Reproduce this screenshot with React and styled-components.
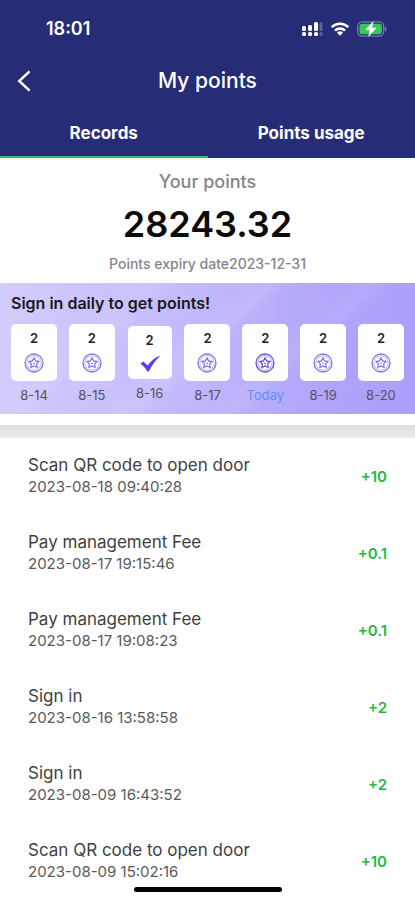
import React, { useState } from 'react'
import styled, { createGlobalStyle } from 'styled-components'

const GlobalStyle = createGlobalStyle`
    * {
        box-sizing: border-box;
    }

    body {
        margin: 0;
        background: #fff;
        font-family: 'Inter', 'Liberation Sans', sans-serif;
        color: #3f3f42;
    }

    h1, h2, p, ul {
        margin: 0;
        padding: 0;
    }

    ul {
        list-style: none;
    }
`;

const days = [
    { label: "8-14", points: 2 },
    { label: "8-15", points: 2 },
    { label: "8-16", points: 2, signed: true },
    { label: "8-17", points: 2 },
    { label: "Today", points: 2, today: true },
    { label: "8-19", points: 2 },
    { label: "8-20", points: 2 }
]

const records = [
    { title: "Scan QR code to open door", time: "2023-08-18 09:40:28", amount: "+10" },
    { title: "Pay management Fee", time: "2023-08-17 19:15:46", amount: "+0.1" },
    { title: "Pay management Fee", time: "2023-08-17 19:08:23", amount: "+0.1" },
    { title: "Sign in", time: "2023-08-16 13:58:58", amount: "+2" },
    { title: "Sign in", time: "2023-08-09 16:43:52", amount: "+2" },
    { title: "Scan QR code to open door", time: "2023-08-09 15:02:16", amount: "+10" }
]

const Header = styled.header`
    background: #262d76;
    color: #fff;
`;

const StatusBar = styled.div`
    display: flex;
    align-items: center;
    justify-content: space-between;
    height: 56px;
    padding: 1px 28px 0 46px;
`;

const Clock = styled.time`
    font-size: 18px;
    font-weight: 600;
    line-height: 24px;
`;

const StatusIcons = styled.div`
    display: flex;
    align-items: center;
    gap: 7px;

    svg {
        display: block;
    }
`;

const NavBar = styled.div`
    display: grid;
    grid-template-columns: 48px 1fr 48px;
    align-items: center;
    height: 50px;
`;

const BackButton = styled.button`
    display: flex;
    align-items: center;
    justify-content: center;
    height: 48px;
    padding: 0;
    border: 0;
    background: none;
    color: inherit;
    cursor: pointer;
`;

const Title = styled.h1`
    font-size: 21px;
    font-weight: 500;
    line-height: 28px;
    text-align: center;
`;

const Tabs = styled.div`
    display: grid;
    grid-template-columns: 1fr 1fr;
`;

const Tab = styled.button`
    height: 52px;
    padding: 4px 0 0;
    border: 0;
    border-bottom: 2px solid ${props => props.$active ? '#3fbd6c' : 'transparent'};
    background: none;
    color: inherit;
    font-family: inherit;
    font-size: 17px;
    font-weight: 700;
    line-height: 24px;
    cursor: pointer;
`;

const Summary = styled.section`
    display: flex;
    flex-direction: column;
    align-items: center;
    padding: 12px 0 9px;
    color: #858587;
`;

const SummaryLabel = styled.h2`
    font-size: 18px;
    font-weight: 500;
    line-height: 24px;
`;

const Balance = styled.p`
    color: #0b0b0b;
    font-size: 36px;
    font-weight: 600;
    line-height: 60px;
`;

const Expiry = styled.p`
    font-size: 14px;
    font-weight: 500;
    line-height: 20px;
`;

const Banner = styled.section`
    height: 131px;
    padding: 10px 11px 0;
    background:
        linear-gradient(138deg, transparent 20%, rgba(255, 255, 255, 0.08) 29%, transparent 32%, transparent 42%, rgba(255, 255, 255, 0.1) 49%, transparent 52%, transparent 60%, rgba(255, 255, 255, 0.08) 67%, transparent 70%),
        linear-gradient(100deg, #d3cdfc 0%, #c4bbfd 42%, #b1a6fb 75%, #aa9ffa 100%);
`;

const BannerTitle = styled.h2`
    color: #18181d;
    font-size: 16px;
    font-weight: 600;
    line-height: 20px;
`;

const Days = styled.ul`
    display: flex;
    justify-content: space-between;
    margin-top: 11px;
`;

const Day = styled.li`
    display: flex;
    flex-direction: column;
    align-items: center;
    width: 46px;
    padding-top: ${props => props.$signed ? '2px' : '0'};
    color: ${props => props.$today ? '#5b93f8' : '#55525f'};
    font-size: 13px;
    line-height: 18px;
    white-space: nowrap;
`;

const DayCard = styled.div`
    display: flex;
    flex-direction: column;
    align-items: center;
    gap: 6px;
    width: ${props => props.$signed ? '44px' : '46px'};
    height: ${props => props.$signed ? '53px' : '57px'};
    margin-bottom: 5px;
    padding-top: 5px;
    border-radius: 5px;
    background: #fff;
    color: #242427;
    font-size: 13px;
    font-weight: 600;

    svg {
        display: block;
    }
`;

const Divider = styled.div`
    height: 13px;
    margin-top: 11px;
    background: linear-gradient(#dcdddf, #e9eaec);
`;

const Row = styled.li`
    display: flex;
    align-items: center;
    justify-content: space-between;
    height: 77px;
    padding: 0 28px 1px;
`;

const RowTitle = styled.p`
    font-size: 17px;
    line-height: 22px;
`;

const RowTime = styled.p`
    color: #59595c;
    font-size: 15px;
    line-height: 22px;
`;

const Amount = styled.span`
    color: #27b83f;
    font-size: 15px;
    font-weight: 600;
`;

const HomeIndicator = styled.div`
    position: fixed;
    bottom: 8px;
    left: 50%;
    width: 148px;
    height: 5px;
    margin-left: -74px;
    border-radius: 3px;
    background: #000;
`;

const SignalIcon = () => (
    <svg width="21" height="14" viewBox="0 0 21 14" fill="#fff" aria-hidden="true">
        <rect x="0" y="4" width="4" height="5" rx="1.5" />
        <rect x="6" y="3" width="4" height="6" rx="1.5" />
        <rect x="12" y="0" width="4" height="9" rx="1.5" />
        <rect x="17.500" y="0" width="3" height="9" rx="1.5" opacity="0.25" />
        <rect x="0" y="10" width="4" height="4" rx="1.5" />
        <rect x="6" y="10" width="4" height="4" rx="1.5" />
        <rect x="12" y="10" width="4" height="4" rx="1.5" />
        <rect x="17.500" y="10" width="3" height="4" rx="1.5" opacity="0.25" />
    </svg>
)

const WifiIcon = () => (
    <svg width="20" height="14" viewBox="0 0 20 14" fill="none" stroke="#fff" strokeWidth="2.6" aria-hidden="true">
        <path d="M1.700 5.200a11.800 11.800 0 0 1 16.600 0" />
        <path d="M5 8.600a7.100 7.100 0 0 1 10 0" />
        <path d="M10 13.8 7 10.7a4.3 4.3 0 0 1 6 0z" fill="#fff" stroke="none" />
    </svg>
)

const BatteryIcon = () => (
    <svg width="30" height="16" viewBox="0 0 30 16" aria-hidden="true">
        <rect x="0.7" y="0.9" width="26" height="14.2" rx="4.5" fill="none" stroke="#7379a6" strokeWidth="1.4" />
        <path d="M28 5.5c2 .6 2 4.4 0 5z" fill="#7379a6" />
        <rect x="2.5" y="2.7" width="22.4" height="10.6" rx="2.8" fill="#35c759" />
        <path d="M16 .8 8.8 8.8h4.3L11.7 15.2 19 7H14.7z" fill="#fff" stroke="#fff" strokeWidth="0.6" strokeLinejoin="round" />
    </svg>
)

const BackIcon = () => (
    <svg width="14" height="22" viewBox="0 0 14 22" fill="none" stroke="#fff" strokeWidth="2.4" aria-hidden="true">
        <path d="M12.6 1.4 2.2 11l10.4 9.6" />
    </svg>
)

const CoinIcon = ({ color }) => (
    <svg width="20" height="20" viewBox="0 0 20 20" fill="none" stroke={color} strokeLinejoin="round" aria-hidden="true">
        <circle cx="10" cy="10" r="9" strokeWidth="1.3" />
        <circle cx="10" cy="10" r="7.2" strokeWidth="0.8" opacity="0.7" />
        <path d="m10 4.8 1.6 3.2 3.5.5-2.5 2.5.6 3.5-3.2-1.6-3.2 1.6.6-3.5-2.5-2.5 3.5-.5z" strokeWidth="1.3" />
        <circle cx="10" cy="10.3" r="0.9" fill={color} stroke="none" />
    </svg>
)

const CheckIcon = () => (
    <svg width="20" height="18" viewBox="0 0 20 18" fill="#5b3fe8" aria-hidden="true">
        <path d="M.4 8.600 3.400 6.600l4.300 4C10.600 6.500 14.700 2.500 19.400.800l.2.600C15.200 5.600 11.600 11 8.700 16.400H7.200C5.400 13.400 3.200 10.700.4 8.600z" />
    </svg>
)

export default function App() {
    const [tab, setTab] = useState("Records")

    return (
        <>
            <GlobalStyle />
            <Header>
                <StatusBar>
                    <Clock>18:01</Clock>
                    <StatusIcons>
                        <SignalIcon />
                        <WifiIcon />
                        <BatteryIcon />
                    </StatusIcons>
                </StatusBar>
                <NavBar>
                    <BackButton type="button" aria-label="Back"><BackIcon /></BackButton>
                    <Title>My points</Title>
                </NavBar>
                <Tabs role="tablist">
                    {["Records", "Points usage"].map((name) => (
                        <Tab
                            key={name}
                            type="button"
                            role="tab"
                            aria-selected={tab === name}
                            $active={tab === name}
                            onClick={() => setTab(name)}
                        >
                            {name}
                        </Tab>
                    ))}
                </Tabs>
            </Header>
            <main>
                <Summary>
                    <SummaryLabel>Your points</SummaryLabel>
                    <Balance>28243.32</Balance>
                    <Expiry>Points expiry date2023-12-31</Expiry>
                </Summary>
                <Banner>
                    <BannerTitle>Sign in daily to get points!</BannerTitle>
                    <Days>
                        {days.map((day) => (
                            <Day key={day.label} $signed={day.signed} $today={day.today}>
                                <DayCard $signed={day.signed}>
                                    {day.points}
                                    {day.signed ? <CheckIcon /> : <CoinIcon color={day.today ? '#6354dc' : '#8378e6'} />}
                                </DayCard>
                                {day.label}
                            </Day>
                        ))}
                    </Days>
                </Banner>
                <Divider />
                <ul>
                    {records.map((item) => (
                        <Row key={item.time}>
                            <div>
                                <RowTitle>{item.title}</RowTitle>
                                <RowTime>{item.time}</RowTime>
                            </div>
                            <Amount>{item.amount}</Amount>
                        </Row>
                    ))}
                </ul>
            </main>
            <HomeIndicator />
        </>
    )
}
